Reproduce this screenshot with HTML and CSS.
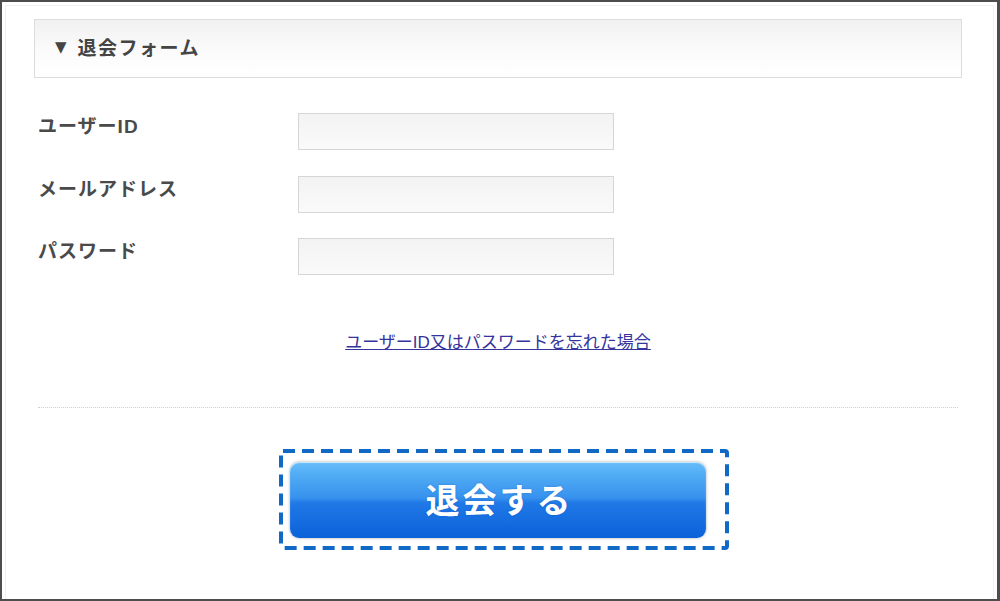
FILE: index.html
```html
<!DOCTYPE html>
<html lang="ja">
<head>
    <meta charset="UTF-8">
    <title>退会フォーム</title>
    <link rel="stylesheet" href="styles.css">
</head>
<body>
    <div class="frame">
        <div class="page">
            <div class="form-head"><span class="arrow">▼</span>退会フォーム</div>

            <form class="form-rows">
                <label for="userId">ユーザーID</label>
                <input type="text" id="userId">
                <label for="mail">メールアドレス</label>
                <input type="text" id="mail">
                <label for="pass">パスワード</label>
                <input type="password" id="pass">
            </form>

            <p class="forgot"><a href="#">ユーザーID又はパスワードを忘れた場合</a></p>

            <div class="divider"></div>

            <div class="submit-area">
                <div class="focus-ring">
                    <svg class="dash" width="450" height="101" viewBox="0 0 450 101">
                        <rect x="2" y="2" width="446" height="97" rx="2" fill="none" stroke="#1069c4" stroke-width="4" stroke-dasharray="12 7"/>
                    </svg>
                    <button type="button" class="withdraw-btn">退会する</button>
                </div>
            </div>
        </div>
    </div>
</body>
</html>
```

FILE: styles.css
```css
* {
    margin: 0;
    padding: 0;
    box-sizing: border-box;
}
body {
    background: #fff;
    font-family: 'Liberation Sans', 'Noto Sans CJK JP', sans-serif;
    color: #4a4a4a;
}
.frame {
    width: 1000px;
    height: 601px;
    border: 2px solid #4d4d4d;
    border-right-width: 3px;
    overflow: hidden;
}
.page {
    height: 100%;
    border: 1px solid #f1f1f1;
    margin: 3px;
    padding: 13px 31px 0 28px;
}
.form-head {
    display: flex;
    align-items: center;
    height: 59px;
    padding: 0 0 4px 20px;
    border: 1px solid #dcdcdc;
    background: linear-gradient(#f1f1f1, #fbfbfb 55%, #fff);
    font-size: 19px;
    font-weight: bold;
    letter-spacing: 1.5px;
    color: #444;
}
.arrow {
    font-family: 'DejaVu Sans', sans-serif;
    font-size: 15px;
    margin-right: 11px;
    letter-spacing: 0;
}
.form-rows {
    display: grid;
    grid-template-columns: 260px 316px;
    row-gap: 25.5px;
    margin-top: 35px;
    padding-left: 4px;
}
.form-rows label {
    font-size: 19px;
    font-weight: bold;
    letter-spacing: 1px;
    line-height: 28px;
    align-self: start;
}
.form-rows input {
    height: 37px;
    border: 1px solid #d6d6d6;
    background: linear-gradient(#f3f3f3, #fafafa);
    outline: none;
}
.forgot {
    margin-top: 55px;
    text-align: center;
    font-size: 17px;
    line-height: 25px;
}
.forgot a {
    color: #34349c;
}
.divider {
    margin: 52px 4px 0;
    border-top: 1px dotted #cfcfcf;
}
.submit-area {
    display: flex;
    justify-content: center;
    margin-top: 41px;
}
.focus-ring {
    position: relative;
    margin-left: 12px;
    padding: 13px 23px 12px 11px;
}
.dash {
    position: absolute;
    top: 0;
    left: 0;
}
.withdraw-btn {
    display: block;
    width: 416px;
    height: 76px;
    border: none;
    border-radius: 9px;
    background: linear-gradient(#66bdf9, #4ca7f3 22%, #3792ee 47%, #2079e6 54%, #0a61d9);
    box-shadow: 0 0 3px rgba(0, 0, 0, 0.35), inset 0 1px 1px rgba(255, 255, 255, 0.7);
    font-family: 'Liberation Sans', 'Noto Sans CJK JP', sans-serif;
    font-size: 34px;
    font-weight: bold;
    letter-spacing: 3px;
    padding: 0 0 4px 3px;
    color: #fff;
    text-shadow: 0 0 2px rgba(0, 60, 160, 0.4);
    cursor: pointer;
}
```
